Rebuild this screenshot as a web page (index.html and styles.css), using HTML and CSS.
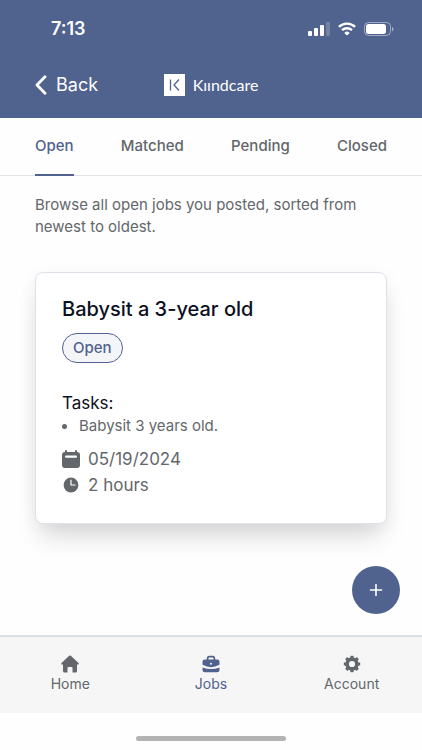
FILE: index.html
```html
<!DOCTYPE html>
<html lang="en">
<head>
<meta charset="utf-8">
<meta name="viewport" content="width=device-width, initial-scale=1">
<title>Kiindcare – Jobs</title>
<link rel="stylesheet" href="styles.css">
</head>
<body>
<header class="top">
  <div class="status">
    <time class="clock">7:13</time>
    <div class="indicators">
      <svg width="22" height="14" viewBox="0 0 22 14" fill="currentColor" aria-hidden="true">
        <rect x="0" y="9" width="4" height="5" rx="1"/><rect x="6" y="6" width="4" height="8" rx="1"/><rect x="12" y="3" width="4" height="11" rx="1"/><rect x="18" y="0" width="4" height="14" rx="1" opacity=".2"/>
      </svg>
      <svg width="18" height="14" viewBox="0 0 18 14" fill="none" stroke="currentColor" stroke-width="2.4" aria-hidden="true">
        <path d="M.9 4.9a11.6 11.6 0 0 1 16.2 0M4 8.2a7.2 7.2 0 0 1 10 0"/><path d="M9 13.6 6.3 10.9a3.9 3.9 0 0 1 5.4 0z" fill="currentColor" stroke="none"/>
      </svg>
      <svg width="30" height="14" viewBox="0 0 30 14" aria-hidden="true">
        <rect x=".5" y=".5" width="26" height="13" rx="4" fill="none" stroke="currentColor" opacity=".45"/><rect x="2" y="2" width="20" height="10" rx="2.5" fill="currentColor"/><path d="M28 5v4.400q1.500-.6 1.500-2.200T28 5z" fill="currentColor" opacity=".5"/>
      </svg>
    </div>
  </div>
  <div class="bar">
    <a class="back" href="#back">
      <svg width="12" height="20" viewBox="0 0 12 20" fill="none" stroke="currentColor" stroke-width="2.800" stroke-linecap="round" stroke-linejoin="round" aria-hidden="true"><path d="M10 1.800 2 10l8 8.200"/></svg>
      Back
    </a>
    <div class="brand">
      <svg width="21" height="22" viewBox="0 0 21 22" aria-hidden="true"><rect width="21" height="22" fill="#fff"/><path d="M6.500 5.500v11M15 5.500 10 11l5 5.500" fill="none" stroke="#50628e" stroke-width="1.300"/></svg>
      <span class="wordmark">Kıındcare</span>
    </div>
  </div>
</header>
<nav class="tabs" aria-label="Job status">
  <a class="tab active" href="#open" aria-current="page">Open</a>
  <a class="tab" href="#matched">Matched</a>
  <a class="tab" href="#pending">Pending</a>
  <a class="tab" href="#closed">Closed</a>
</nav>
<main class="content">
  <p class="intro">Browse all open jobs you posted, sorted from newest to oldest.</p>
  <article class="card">
    <h2 class="title">Babysit a 3-year old</h2>
    <span class="badge">Open</span>
    <h3 class="tasks-label">Tasks:</h3>
    <ul class="tasks"><li>Babysit 3 years old.</li></ul>
    <div class="meta">
      <svg width="18" height="18" viewBox="0 0 18 18" aria-hidden="true"><path d="M4 0q1 0 1 1v1h8V1q0-1 1-1t1 1v1q3 0 3 3v10q0 3-3 3H3q-3 0-3-3V5q0-3 3-3V1q0-1 1-1z" fill="#63676b"/><rect x="3" y="5.500" width="12" height="2.200" rx="1" fill="#fff"/></svg>
      05/19/2024
    </div>
    <div class="meta">
      <svg width="18" height="18" viewBox="0 0 18 18" aria-hidden="true"><circle cx="9" cy="9" r="7.400" fill="#63676b"/><path d="M9 4.200V9h4" fill="none" stroke="#fff" stroke-width="1.200" stroke-linecap="round"/></svg>
      2 hours
    </div>
  </article>
  <button class="add" type="button" aria-label="Add job">
    <svg width="14" height="14" viewBox="0 0 14 14" fill="none" stroke="currentColor" stroke-width="1.600" stroke-linecap="round" aria-hidden="true"><path d="M7 1.500v11M1.500 7h11"/></svg>
  </button>
</main>
<nav class="bottom" aria-label="Main">
  <a class="item" href="#home">
    <svg width="18" height="18" viewBox="0 0 18 18" fill="currentColor" aria-hidden="true"><path d="M8.200.8q.8-.7 1.600 0l7.700 7.300q.9 1.300-.7 1.400H16V16q0 1.500-1.500 1.500h-3V13q0-1-1-1h-3q-1 0-1 1v4.500h-3Q2 17.500 2 16V9.500h-.8Q-.4 9.400.5 8.100z"/></svg>
    Home
  </a>
  <a class="item current" href="#jobs" aria-current="page">
    <svg width="18" height="18" viewBox="0 0 18 18" fill="currentColor" aria-hidden="true"><path fill-rule="evenodd" d="M4.800 4.500V3.300Q4.800.8 7.300.8h3.400q2.500 0 2.500 2.500v1.200h2q2.300 0 2.300 2.300v3Q13 12.200 9 12.200T.5 9.800v-3q0-2.300 2.300-2.300zM6.500 4.500h5V3.300q0-.9-.9-.9H7.400q-.9 0-.9.900zM9 7.800a1 1 0 1 0 0 2 1 1 0 0 0 0-2z"/><path d="M.5 12.400Q5 14 9 14t8.500-1.600v2.300q0 2.500-2.500 2.500H3Q.5 17.200.5 14.700z"/></svg>
    Jobs
  </a>
  <a class="item" href="#account">
    <svg width="18" height="18" viewBox="0 0 18 18" aria-hidden="true"><g fill="none" stroke="currentColor"><circle cx="9" cy="9" r="4.900" stroke-width="3.600"/><path d="M9 .8v3M9 14.200v3M.8 9h3M14.200 9h3M3.200 3.200l2 2M12.800 12.800l2 2M3.200 14.800l2-2M12.800 5.200l2-2" stroke-width="3.200" stroke-linejoin="round"/></g></svg>
    Account
  </a>
</nav>
<footer class="home-area"><div class="home-indicator"></div></footer>
</body>
</html>
```
FILE: styles.css
```css
* { box-sizing: border-box; }
body {
  margin: 0;
  min-height: 100vh;
  display: flex;
  flex-direction: column;
  background: #fefefe;
  color: #63676b;
  font-family: Inter, "Liberation Sans", sans-serif;
  font-size: 15px;
  line-height: 22px;
}
a { color: inherit; text-decoration: none; }
h2, h3, p, ul { margin: 0; padding: 0; }
svg { display: block; flex: none; }

.top { background: #50628e; color: #fff; padding-bottom: 19px; }
.status {
  display: flex;
  align-items: center;
  justify-content: space-between;
  height: 57px;
  padding: 0 28px 0 51px;
}
.clock { font-size: 18px; line-height: 25px; font-weight: 600; }
.indicators { display: flex; align-items: center; gap: 8px; }
.bar {
  display: grid;
  grid-template-columns: 1fr auto 1fr;
  align-items: center;
  padding: 14px 35px 0;
}
.back { display: flex; align-items: center; gap: 9px; font-size: 18px; line-height: 28px; }
.brand { display: flex; align-items: center; gap: 8px; }
.wordmark { font-family: Lato, sans-serif; font-size: 16px; }

.tabs {
  display: flex;
  justify-content: space-between;
  padding: 0 35px;
  border-bottom: 1px solid #dde3e7;
}
.tab { padding: 17px 0; margin-bottom: -1px; border-bottom: 2px solid transparent; font-weight: 500; }
.tab.active { color: #50628e; border-color: #50628e; }

.content { flex: 1; display: flex; flex-direction: column; padding: 18px 35px 21px; }
.card {
  margin-top: 34px;
  padding: 24px 26px 25px;
  border: 1px solid #dde1e8;
  border-radius: 8px;
  background: #fff;
  box-shadow: 0 18px 26px -6px rgba(0, 0, 0, .14), 0 4px 18px rgba(0, 0, 0, .05);
}
.title { color: #0c1022; font-size: 20px; line-height: 24px; font-weight: 500; }
.badge {
  display: inline-block;
  margin-top: 12px;
  padding: 3px 10px;
  border: 1px solid #50628e;
  border-radius: 15px;
  background: #f4f5f9;
  color: #50628e;
  font-weight: 500;
}
.tasks-label { margin-top: 28px; color: #0c1022; font-size: 17px; line-height: 24px; font-weight: 400; }
.tasks { list-style: none; margin-bottom: 9px; }
.tasks li { display: flex; align-items: center; gap: 12px; }
.tasks li::before { content: ""; width: 5px; height: 5px; border-radius: 50%; background: #63676b; }
.meta { display: flex; align-items: center; gap: 8px; font-size: 17px; line-height: 26px; }
.add {
  display: grid;
  place-items: center;
  width: 48px;
  height: 48px;
  margin: auto -13px 0 auto;
  padding: 0;
  border: 0;
  border-radius: 50%;
  background: #50628e;
  color: #fff;
}

.bottom {
  display: grid;
  grid-template-columns: repeat(3, 1fr);
  padding: 18px 0;
  border-top: 2px solid #dae0e5;
  background: #f6f6f7;
}
.item { display: flex; flex-direction: column; align-items: center; font-size: 14px; }
.item.current { color: #50628e; }
.home-area { display: flex; justify-content: center; padding: 23px 0 9px; }
.home-indicator { width: 150px; height: 5px; border-radius: 3px; background: #b3b3b3; }
```
